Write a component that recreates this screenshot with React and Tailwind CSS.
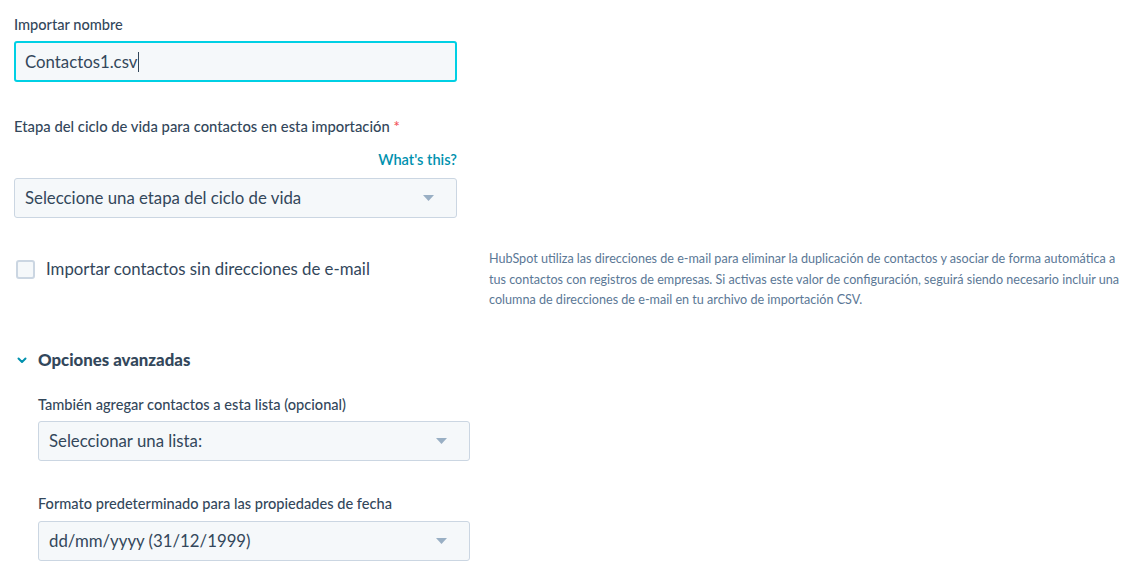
import React from "react";

const font = { fontFamily: "Lato, 'Noto Sans', sans-serif" };

const Caret = () => (
  <svg width="11" height="6" viewBox="0 0 11 6" className="shrink-0">
    <path d="M0 0h11L5.5 6z" fill="#99afc4" />
  </svg>
);

const FakeSelect = ({ value, className = "" }) => (
  <div
    className={`flex h-[40px] items-center justify-between rounded-[3px] border border-[#cbd6e2] bg-[#f5f8fa] pl-[10px] pr-[22px] text-[16.8px] text-[#33475b] ${className}`}
  >
    <span>{value}</span>
    <Caret />
  </div>
);

export default function App() {
  return (
    <div className="min-h-[577px] w-[1143px] bg-white text-[#33475b]" style={font}>
      <div className="flex">
        {/* left column */}
        <div className="ml-[14px] w-[443px]">
          <label className="block pt-[16px] text-[14.6px] font-medium leading-[18px]">Importar nombre</label>
          <div className="mt-[7px] flex h-[41px] items-center rounded-[3px] border-2 border-[#00d0e4] bg-[#f5f8fa] px-[9px] text-[16.8px]">
            <span>Contactos1.csv</span>
            <span className="ml-[1px] h-[20px] w-[1px] bg-[#33475b]" />
          </div>

          <label className="mt-[35px] block text-[14.8px] font-medium leading-[18px]">
            Etapa del ciclo de vida para contactos en esta importación <span className="text-[#f2545b]">*</span>
          </label>
          <div className="mt-[16px] text-right text-[14.6px] font-semibold leading-[18px] text-[#0091ae]">What's this?</div>
          <FakeSelect value="Seleccione una etapa del ciclo de vida" className="mt-[9px]" />

          <div className="mt-[41px] flex items-center">
            <span className="ml-[2px] h-[19px] w-[19px] rounded-[3px] border-2 border-[#cbd6e2] bg-[#f5f8fa]" />
            <span className="ml-[11px] text-[16.8px] leading-[20px]">Importar contactos sin direcciones de e-mail</span>
          </div>
        </div>

        {/* help text */}
        <p className="ml-[32px] mt-[249px] w-[636px] text-[12.6px] leading-[20.5px] text-[#5b7896]">
          HubSpot utiliza las direcciones de e-mail para eliminar la duplicación de contactos y asociar de forma automática a
          tus contactos con registros de empresas. Si activas este valor de configuración, seguirá siendo necesario incluir una
          columna de direcciones de e-mail en tu archivo de importación CSV.
        </p>
      </div>

      {/* advanced options */}
      <div className="ml-[14px] mt-[39px]">
        <div className="flex items-center">
          <svg width="12" height="8" viewBox="0 0 12 8" className="ml-[2px]">
            <path d="M2.5 2.5l3.5 3.5 3.5-3.5" fill="none" stroke="#0091ae" strokeWidth="2" strokeLinecap="round" strokeLinejoin="round" />
          </svg>
          <span className="ml-[10px] text-[16.8px] font-black leading-[20px]">Opciones avanzadas</span>
        </div>

        <div className="ml-[24px] w-[432px]">
          <label className="mt-[26px] block text-[14.6px] font-medium leading-[18px]">
            También agregar contactos a esta lista (opcional)
          </label>
          <FakeSelect value="Seleccionar una lista:" className="mt-[7px]" />

          <label className="mt-[34px] block text-[14.6px] font-medium leading-[18px]">
            Formato predeterminado para las propiedades de fecha
          </label>
          <FakeSelect value="dd/mm/yyyy (31/12/1999)" className="mt-[8px]" />
        </div>
      </div>
    </div>
  );
}
